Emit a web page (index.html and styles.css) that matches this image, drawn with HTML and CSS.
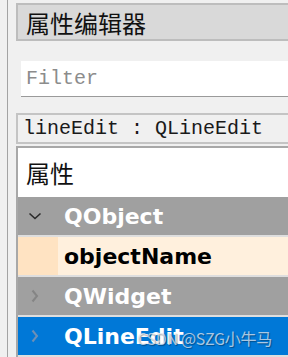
FILE: index.html
```html
<!DOCTYPE html>
<html lang="zh">
<head>
  <meta charset="UTF-8">
  <title>属性编辑器</title>
  <link rel="stylesheet" href="styles.css">
</head>
<body>

  <!-- 属性编辑器 面板 -->
  <div class="panel">
    <div class="title">属性编辑器</div>
    <div class="filter">Filter</div>
    <div class="obj-label">lineEdit : QLineEdit</div>

    <div class="tree">
      <div class="tree-head">属性</div>

      <div class="row group">
        <span class="arrow">
          <svg width="14" height="8" viewBox="0 0 14 8"><path d="M1.5 1.5 L7 6.5 L12.5 1.5" fill="none" stroke="#2a2a2a" stroke-width="1.6"/></svg>
        </span>
        <span class="label">QObject</span>
      </div>

      <div class="row prop">
        <span class="indent"></span>
        <span class="label">objectName</span>
      </div>

      <div class="row group">
        <span class="arrow right">
          <svg width="8" height="14" viewBox="0 0 8 14"><path d="M1.5 1.5 L6 7 L1.5 12.5" fill="none" stroke="#858585" stroke-width="2"/></svg>
        </span>
        <span class="label">QWidget</span>
      </div>

      <div class="row group selected">
        <span class="arrow right">
          <svg width="8" height="14" viewBox="0 0 8 14"><path d="M1.5 1.5 L6 7 L1.5 12.5" fill="none" stroke="#6d8fb5" stroke-width="2"/></svg>
        </span>
        <span class="label">QLineEdit</span>
        <span class="watermark">CSDN @SZG小牛马</span>
      </div>
    </div>
  </div>

</body>
</html>
```

FILE: styles.css
```css
html, body {
  margin: 0;
  padding: 0;
  width: 100%;
  height: 100%;
  background: #f0f0f0;
  overflow: hidden;
}

.panel {
  margin-left: 7px;
  border-left: 1px solid #a3a3a3;
  padding: 3px 0 0 8px;
  height: 100%;
  box-sizing: border-box;
  display: flex;
  flex-direction: column;
}

.title {
  height: 34px;
  border: 2px solid #bdbdbd;
  border-right: none;
  background: #d9d9d9;
  padding-left: 8px;
  display: flex;
  align-items: center;
  font-family: "Noto Sans CJK SC", sans-serif;
  font-size: 24px;
  color: #111;
  white-space: nowrap;
}

.filter {
  margin: 20px 0 0 5px;
  height: 36px;
  background: #fff;
  border-bottom: 1px solid #9a9a9a;
  padding-left: 5px;
  display: flex;
  align-items: center;
  font-family: "Liberation Mono", monospace;
  font-size: 20px;
  color: #8c8c8c;
}

.obj-label {
  margin-top: 16px;
  height: 27px;
  border: 2px solid #c4c4c4;
  border-right: none;
  padding-left: 5px;
  display: flex;
  align-items: center;
  font-family: "Liberation Mono", monospace;
  font-size: 20px;
  color: #1a1a1a;
  white-space: nowrap;
}

.tree {
  margin-top: 2px;
  border-top: 2px solid #a8a8a8;
  border-left: 2px solid #a8a8a8;
  background: #fff;
  flex: 1;
}

.tree-head {
  height: 49px;
  padding-left: 8px;
  display: flex;
  align-items: center;
  font-family: "Noto Sans CJK SC", sans-serif;
  font-size: 24px;
  color: #111;
}

.row {
  position: relative;
  height: 38px;
  border-bottom: 2px solid #dedede;
  display: flex;
  align-items: center;
  font-family: "DejaVu Sans", sans-serif;
  font-weight: bold;
  font-size: 22px;
  white-space: nowrap;
}

.group {
  background: #a0a0a0;
  color: #fff;
}

.selected {
  background: #0078d7;
}

.arrow {
  width: 46px;
  display: flex;
  justify-content: flex-start;
  padding-left: 10px;
  box-sizing: border-box;
}

.arrow.right {
  padding-left: 13px;
}

.prop {
  background: #fff0dd;
  color: #000;
}

.indent {
  width: 40px;
  height: 100%;
  background: #ffe3c2;
  margin-right: 6px;
}

.watermark {
  position: absolute;
  left: 119px;
  top: 9px;
  font-family: "Noto Sans CJK SC", sans-serif;
  font-weight: normal;
  font-size: 16px;
  letter-spacing: -0.3px;
  color: rgba(225, 230, 238, 0.75);
  text-shadow: 1px 1px 1px rgba(0, 0, 0, 0.35);
}
```
